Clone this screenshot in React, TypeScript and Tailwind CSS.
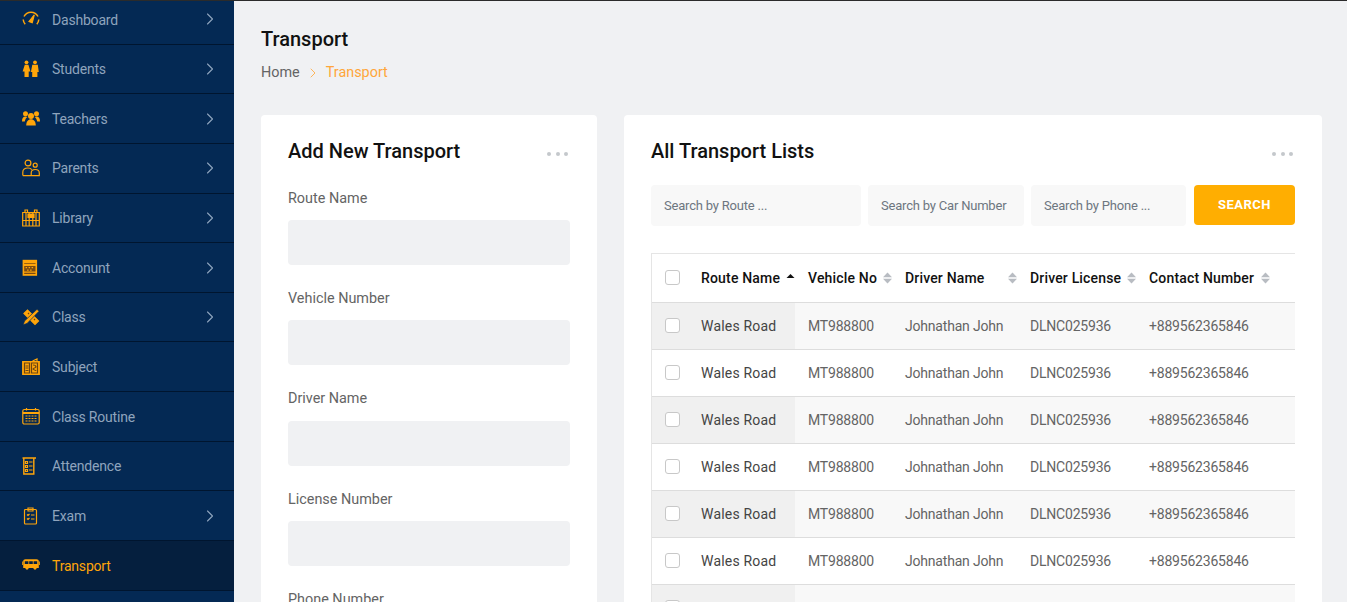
import React from "react";
import { ChevronRight } from "lucide-react";

const O = "#ffa50a";
const base = { width: 18, height: 18, viewBox: "0 0 18 18", fill: "none", stroke: O, strokeWidth: 1.2 } as const;

const icons: Record<string, React.ReactNode> = {
  Dashboard: (<svg {...base}><path d="M3.200 14.200A7.800 7.800 0 0 1 1.200 9.500M2 6.500A7.800 7.800 0 0 1 16 6.500M16.800 9.500a7.800 7.800 0 0 1-2 4.700" strokeWidth="1.500" /><path d="M7 11.500 12.300 4.800 10.200 12.700z" fill={O} /></svg>),
  Students: (<svg {...base} stroke="none" fill={O}><circle cx="4.500" cy="2.300" r="1.900" /><circle cx="13" cy="2.300" r="1.900" /><path d="M2.800 4.800h3.600L8.500 11.500H6.700V17H2.500v-5.500H.6z" /><path d="M10.300 4.800h5.500l1 7.200h-1.400V17h-5.200v-5H8.900z" /></svg>),
  Teachers: (<svg {...base} stroke="none" fill={O}><circle cx="9" cy="6" r="3" /><circle cx="3.500" cy="3.800" r="2.500" /><circle cx="14.500" cy="3.800" r="2.500" /><path d="M4.200 15.500c0-4 1.900-6.300 4.800-6.300s4.800 2.300 4.800 6.300z" /><path d="M0 11.500c0-3.200 1.200-5 3.500-5 .8 0 1.500.2 2 .6-1.500 1-2.300 2.400-2.700 4.400zM18 11.500c0-3.200-1.200-5-3.500-5-.8 0-1.500.2-2 .6 1.500 1 2.300 2.400 2.700 4.400z" /></svg>),
  Parents: (<svg {...base}><circle cx="6" cy="4" r="2.900" /><circle cx="13.200" cy="6.200" r="2" /><path d="M.8 16.500v-3.200C.8 10.600 3 9 6 9c1.800 0 3 .6 3.800 1.600" /><path d="M.8 16.600h16.500v-2.700c0-2-1.700-3.400-4.100-3.400s-4 1.400-4 3.400v2.700" /></svg>),
  Library: (<svg {...base}><path d="M.7 3.500h16.600v13.500H.7z" /><path d="M.7 11.500h16.600M4 3.500V17M7.200 3.500V17M10.800 3.500V17M14 3.500V17M3 1h2.500v2.500H3zM12.500 1H15v2.500h-2.500z" /><path d="M6 5h6v3.500H6z" fill={O} /></svg>),
  Acconunt: (<svg {...base} fill={O} stroke="none"><path d="M.6.800h14.500v16H.6z" /><path d="M2.200 4.200h11.300v.9H2.200zM2.200 7h11.300v5.600H2.200zM2.200 13.800h11.300V15H2.200z" fill="#7a4a12" /><path d="M3.600 8h1.500v1.300H3.600zM6.600 8h1.500v1.300H6.600zM9.600 8h1.500v1.300H9.600zM5.100 10.500h1.500v1.300H5.100zM8.100 10.500h1.500v1.300H8.100z" /></svg>),
  Class: (<svg {...base}><path d="M2 5.500 5.500 2 16.500 13 13 16.500z" fill={O} /><path d="M6 6l1-1M9 9l1-1M12 12l1-1" stroke="#6b4413" /><path d="M15 1.300l2 2L5 15.500l-3.800 1.300L2.500 13z" fill={O} stroke="#002a5c" strokeWidth=".7" /></svg>),
  Subject: (<svg {...base}><path d="M.7 3.500h16.600v13H.7z" fill={O} /><path d="M2.500 5h5v10h-5zM9.500 5h6v10h-6z" stroke="#6b4413" /><path d="M10.500 3 15 1v3" /><path d="M3.500 8h3M3.500 10h3M3.500 12.500h3" stroke="#6b4413" /><path d="M11 7c2 0 3 1 3 2s-3 1-3 2 3 1 3 2" stroke="#6b4413" /></svg>),
  "Class Routine": (<svg {...base}><rect x=".8" y="2.500" width="16.400" height="14.500" rx="1.500" /><path d="M.8 6h16.400" strokeWidth="2" /><path d="M4.500 1v2.500M13.500 1v2.500" /><path d="M3.500 9h11M3.500 11.500h11M3.500 14h11" strokeDasharray="2 1" /></svg>),
  Attendence: (<svg {...base}><path d="M.5 1h13.500M1.800 1v16h10V1" strokeWidth="1.400" /><path d="M3.500 4.500h2v2h-2zM3.500 8.500h2v2h-2zM3.500 12.500h2v2h-2zM7 5h3.500M7 9h3.500M7 13h3.500" /></svg>),
  Exam: (<svg {...base}><rect x="2.500" y="2.500" width="12" height="14.500" rx="1" /><path d="M6 1h5v3H6z" /><path d="M5 7.500l1 1 1.500-1.500M9 8h3.500M5 11.500l1 1 1.500-1.500M9 12h3.500" /></svg>),
  Transport: (<svg {...base} stroke="none" fill={O}><path d="M3.500 3.200h11c1.500 0 2.300.9 2.300 2.200v6.600H1.200V5.400c0-1.300.8-2.200 2.300-2.200z" /><path d="M2.800 5.200h3.600v2.900H2.800zM7.200 5.200h3.600v2.900H7.200zM11.600 5.200h3.600v2.900h-3.600z" fill="#041f40" /><circle cx="5" cy="12.300" r="1.400" /><circle cx="13" cy="12.300" r="1.400" /><path d="M0 5.500h.8v3.400H0zM17.200 5.500h.8v3.400h-.8z" /></svg>),
};

const nav: [string, boolean][] = [
  ["Dashboard", true], ["Students", true], ["Teachers", true], ["Parents", true], ["Library", true], ["Acconunt", true],
  ["Class", true], ["Subject", false], ["Class Routine", false], ["Attendence", false], ["Exam", true], ["Transport", false],
];

function Dots() {
  return (
    <div className="mr-[2px] mt-[6px] flex gap-[4.5px]">
      <span className="h-[4px] w-[4px] rounded-full bg-[#c4c8cc]" />
      <span className="h-[4px] w-[4px] rounded-full bg-[#c4c8cc]" />
      <span className="h-[4px] w-[4px] rounded-full bg-[#c4c8cc]" />
    </div>
  );
}

function Sort({ active }: { active?: boolean }) {
  return (
    <svg width="9" height="14" viewBox="0 0 9 14" className="shrink-0">
      <path d={active ? "M4.500 3 8.500 7H.5z" : "M4.500 1.500 9 6.200H0z"} fill={active ? "#111111" : "#b8bcc2"} />
      {!active && <path d="M4.500 12.500 9 7.800H0z" fill="#b8bcc2" />}
    </svg>
  );
}

const Check = () => <span className="block h-[15px] w-[15px] rounded-[3px] border border-[#c8c8c8] bg-white" />;

const fields = ["Route Name", "Vehicle Number", "Driver Name", "License Number", "Phone Number"];
const heads = ["Route Name", "Vehicle No", "Driver Name", "Driver License", "Contact Number"];

export default function App() {
  return (
    <div className="flex h-[602px] w-full overflow-hidden border-t border-[#2b2b2b] bg-[#f0f1f3] text-[14.4px] text-[#646464]" style={{ fontFamily: "Roboto, sans-serif" }}>
      <aside className="w-[234px] shrink-0 overflow-hidden bg-[#042954]">
        <nav className="-mt-[6px]">
          {nav.map(([label, arrow]) => {
            const active = label === "Transport";
            return (
              <div key={label} className={`flex h-[49.65px] items-center border-b border-[#00152f] pl-[22px] pr-[14px] ${active ? "bg-[#051f3e] text-[#ffa50a]" : "text-[#8fa4bd]"}`}>
                <span className="flex w-[30px] shrink-0">{icons[label]}</span>
                <span className="pt-[1.4px] text-[14px] tracking-[-0.2px]">{label}</span>
                {arrow && <ChevronRight className="ml-auto text-[#8fa4bd]" size={20} strokeWidth={1.3} />}
              </div>
            );
          })}
        </nav>
      </aside>
      <main className="min-w-0 flex-1 pl-[27px] pr-[25px] pt-[25px]">
        <h1 className="text-[20px] font-medium leading-[26px] text-[#111111]">Transport</h1>
        <div className="mt-[10px] flex items-center leading-[22px]">
          <span>Home</span>
          <ChevronRight className="mx-[5px] text-[#ffb04d]" size={16} strokeWidth={1.4} />
          <span className="text-[#ffa63a]">Transport</span>
        </div>
        <div className="mt-[31px] flex items-start gap-[27px]">
          <section className="w-[336px] shrink-0 rounded-[4px] bg-white px-[27px] pt-[23px]">
            <div className="flex items-center justify-between">
              <h2 className="text-[20px] font-medium leading-[26px] text-[#111111]">Add New Transport</h2>
              <Dots />
            </div>
            <div className="mt-[23px]">
              {fields.map((f) => (
                <div key={f} className="mb-[22.4px]">
                  <div className="mb-[10.4px] pt-[0.6px] leading-[22px]">{f}</div>
                  <div className="h-[45px] rounded-[4px] bg-[#f0f1f3]" />
                </div>
              ))}
            </div>
          </section>
          <section className="min-w-0 flex-1 rounded-[4px] bg-white px-[27px] pt-[23px]">
            <div className="flex items-center justify-between">
              <h2 className="text-[20px] font-medium leading-[26px] text-[#111111]">All Transport Lists</h2>
              <Dots />
            </div>
            <div className="mt-[21px] flex text-[13px] tracking-[-0.2px]">
              <input placeholder="Search by Route ..." className="mr-[7px] h-[41px] w-[210px] rounded-[4px] bg-[#f8f8f8] px-[13px] outline-none placeholder:text-[#6d7680]" />
              <input placeholder="Search by Car Number" className="mr-[7px] h-[41px] w-[156px] rounded-[4px] bg-[#f8f8f8] px-[13px] outline-none placeholder:text-[#6d7680]" />
              <input placeholder="Search by Phone ..." className="h-[41px] w-[155px] rounded-[4px] bg-[#f8f8f8] px-[13px] outline-none placeholder:text-[#6d7680]" />
              <button className="ml-[8px] h-[40px] w-[101px] rounded-[4px] bg-[#ffae01] text-[13px] font-bold tracking-[0.5px] text-white">SEARCH</button>
            </div>
            <div className="mt-[27px] overflow-hidden border-l border-t border-[#e5e5e5]">
              <table className="w-full table-fixed border-collapse">
                <colgroup>
                  <col className="w-[36px]" /><col className="w-[107px]" /><col className="w-[97px]" /><col className="w-[125px]" /><col className="w-[119px]" /><col />
                </colgroup>
                <thead>
                  <tr className="h-[48px] border-b border-[#dddddd] text-left text-[#111111]">
                    <th className="pl-[13px]"><Check /></th>
                    {heads.map((h, i) => (
                      <th key={h} className={`whitespace-nowrap pl-[13px] pt-[1px] text-[14px] font-medium tracking-[0.17px] ${i === 4 ? "pr-[25px]" : ""}`}>
                        <span className="flex items-center justify-between">{h}<Sort active={i === 0} /></span>
                      </th>
                    ))}
                  </tr>
                </thead>
                <tbody>
                  {[0, 1, 2, 3, 4, 5, 6].map((r) => {
                    const odd = r % 2 === 0;
                    const rest = `pl-[13px] pt-[1px] ${odd ? "bg-[#f8f8f8]" : "bg-white"}`;
                    const stick = odd ? "bg-[#f0f0f0]" : "bg-white";
                    return (
                      <tr key={r} className="h-[47px] whitespace-nowrap border-b border-[#dddddd] text-[14px] tracking-[-0.2px]">
                        <td className={`pl-[13px] ${stick}`}><Check /></td>
                        <td className={`pl-[13px] pt-[1px] tracking-[0.2px] text-[#444444] ${stick}`}>Wales Road</td>
                        <td className={rest}>MT988800</td>
                        <td className={rest}>Johnathan John</td>
                        <td className={rest}>DLNC025936</td>
                        <td className={rest}>+889562365846</td>
                      </tr>
                    );
                  })}
                </tbody>
              </table>
            </div>
          </section>
        </div>
      </main>
    </div>
  );
}
